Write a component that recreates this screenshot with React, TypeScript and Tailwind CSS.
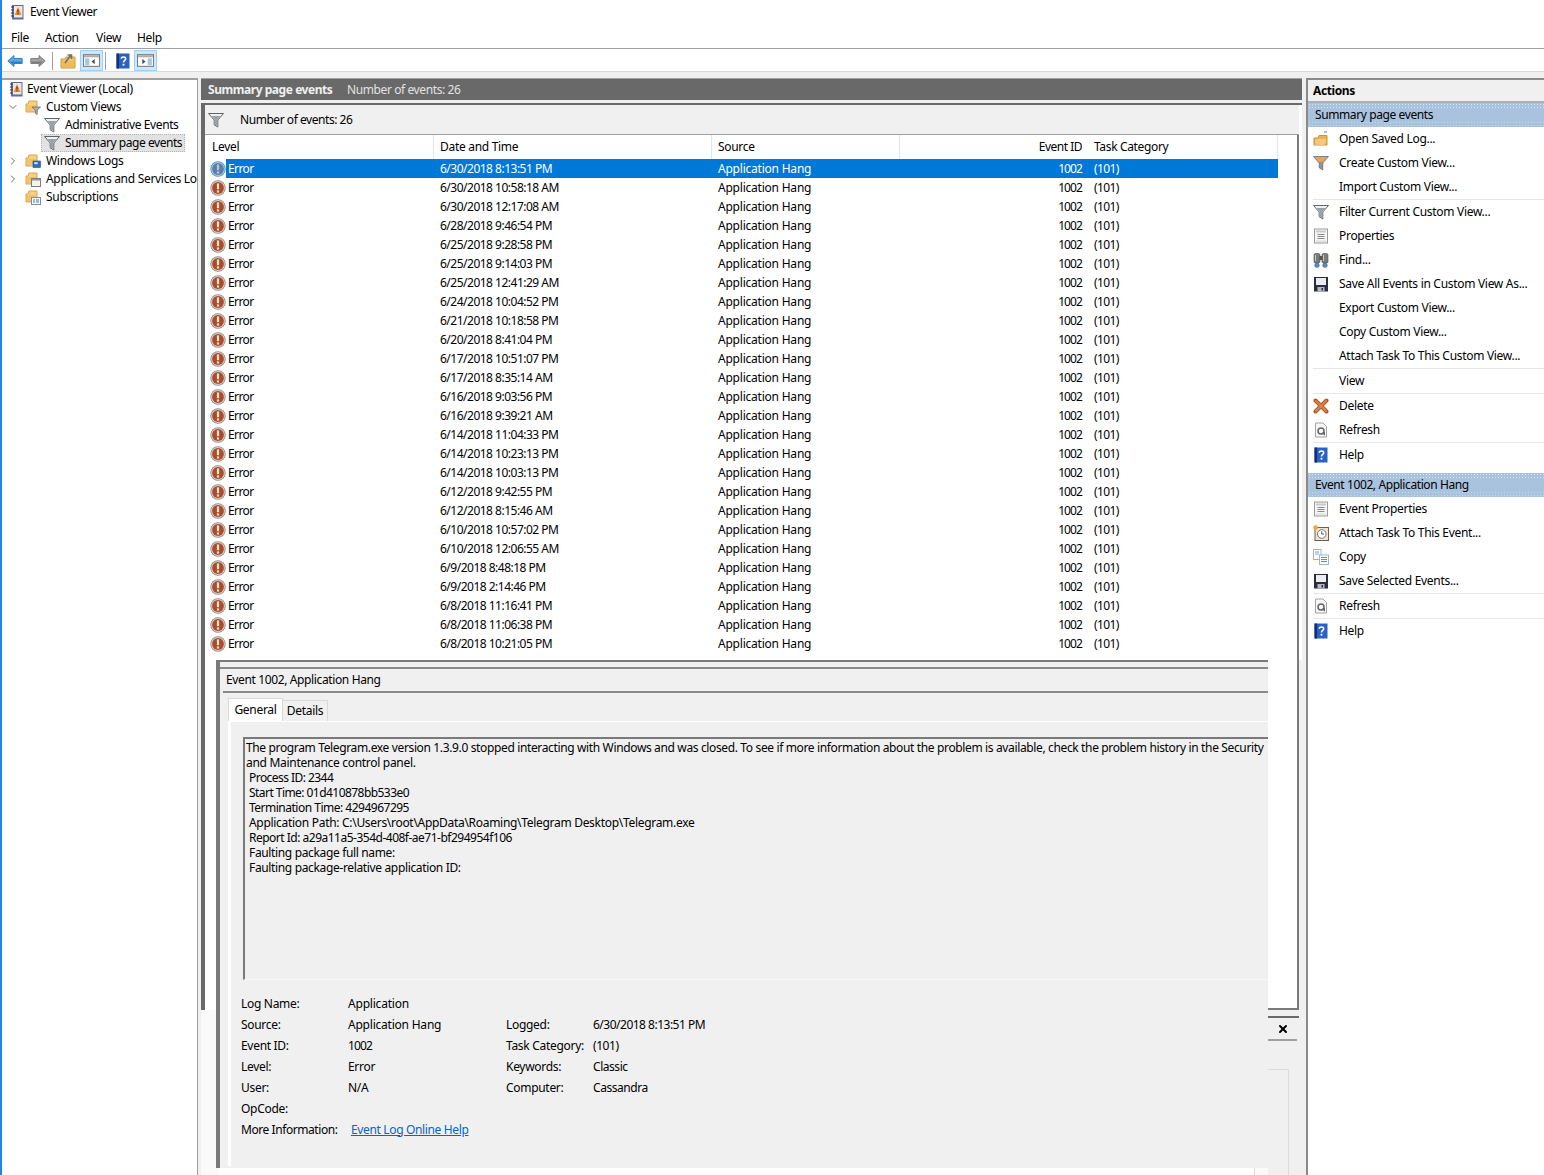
import type { ReactNode } from "react";
import { ChevronDown, ChevronRight, X } from "lucide-react";

const EVENTS = [
  "6/30/2018 8:13:51 PM",
  "6/30/2018 10:58:18 AM",
  "6/30/2018 12:17:08 AM",
  "6/28/2018 9:46:54 PM",
  "6/25/2018 9:28:58 PM",
  "6/25/2018 9:14:03 PM",
  "6/25/2018 12:41:29 AM",
  "6/24/2018 10:04:52 PM",
  "6/21/2018 10:18:58 PM",
  "6/20/2018 8:41:04 PM",
  "6/17/2018 10:51:07 PM",
  "6/17/2018 8:35:14 AM",
  "6/16/2018 9:03:56 PM",
  "6/16/2018 9:39:21 AM",
  "6/14/2018 11:04:33 PM",
  "6/14/2018 10:23:13 PM",
  "6/14/2018 10:03:13 PM",
  "6/12/2018 9:42:55 PM",
  "6/12/2018 8:15:46 AM",
  "6/10/2018 10:57:02 PM",
  "6/10/2018 12:06:55 AM",
  "6/9/2018 8:48:18 PM",
  "6/9/2018 2:14:46 PM",
  "6/8/2018 11:16:41 PM",
  "6/8/2018 11:06:38 PM",
  "6/8/2018 10:21:05 PM",
];

type IconName =
  | "app" | "back" | "forward" | "folderUp" | "pane" | "help" | "paneRight" | "folderFilter" | "folderLogs"
  | "folderApps" | "folderSubs" | "filter" | "filterOrange" | "openLog" | "props" | "find" | "save" | "del"
  | "refresh" | "task" | "copy" | "error" | "errorSel";

function Icon({ name, size = 16 }: { name: IconName; size?: number }) {
  const folder = (
    <>
      <path d="M1 5 H3 L4 2 H12 V13 H1 Z" fill="#f6cf82" stroke="#d8a54a" />
      <path d="M2 7 H11 M2 9 H9 M2 11 H8" stroke="#eeb55a" />
    </>
  );
  const body: Record<IconName, ReactNode> = {
    app: (
      <>
        <rect x="3" y="1" width="11.5" height="14.5" fill="#5a6aa0" />
        <rect x="5" y="2" width="8.5" height="11.5" fill="#f0e8d8" />
        <path d="M9 3 L12.6 11 H5.6 Z" fill="#e58f3a" />
        <rect x="8.4" y="5.5" width="1.2" height="3" fill="#7a2c12" />
        <rect x="8.4" y="9.2" width="1.2" height="1.2" fill="#7a2c12" />
        <path d="M2 3 H4.5 M2 6 H4.5 M2 9 H4.5 M2 12 H4.5" stroke="#30304a" />
      </>
    ),
    back: (
      <>
        <path d="M0.8 8 L7 2.5 V5.5 H15.2 V10.5 H7 V13.5 Z" fill="#5aa9ea" stroke="#1c6cb8" strokeWidth="0.8" />
        <path d="M3 8.4 H14.5 V10 H6.5 V12 Z" fill="#2b7cc9" />
      </>
    ),
    forward: (
      <>
        <path d="M15.2 8 L9 2.5 V5.5 H0.8 V10.5 H9 V13.5 Z" fill="#a3a3a3" stroke="#6a6a6a" strokeWidth="0.8" />
        <path d="M13 8.4 H1.5 V10 H9.5 V12 Z" fill="#7d7d7d" />
      </>
    ),
    folderUp: (
      <>
        <path d="M1 6 H5 L6 4 H15 V15 H1 Z" fill="#f3c469" stroke="#d09a3c" />
        <path d="M2 9 H14 M2 11 H14 M2 13 H14" stroke="#eab04f" />
        <path d="M5 10 L10.5 2.5 M7.5 2 H11.5 V6" stroke="#6f6f6f" strokeWidth="1.6" fill="none" />
      </>
    ),
    pane: (
      <>
        <rect x="0.5" y="2.5" width="15" height="11" fill="#fff" stroke="#7c7c7c" />
        <rect x="1" y="3" width="14" height="2" fill="#a8aeb5" />
        <rect x="2" y="6" width="4" height="6.5" fill="#a7c6e2" />
        <path d="M11 6.5 V11.5 L8 9 Z" fill="#4a4a4a" />
      </>
    ),
    paneRight: (
      <>
        <rect x="0.5" y="2.5" width="15" height="11" fill="#fff" stroke="#7c7c7c" />
        <rect x="1" y="3" width="14" height="2" fill="#a8aeb5" />
        <rect x="10" y="6" width="4" height="6.5" fill="#a7c6e2" />
        <path d="M5 6.5 V11.5 L8 9 Z" fill="#4a4a4a" />
      </>
    ),
    help: (
      <>
        <rect x="1.5" y="0.5" width="13" height="15" fill="#2a62c4" />
        <rect x="1.5" y="0.5" width="2.5" height="15" fill="#14306f" />
        <path d="M6.3 5.7 C6.3 3.4 10.7 3.4 10.7 5.7 C10.7 7.4 8.5 7.4 8.5 9.4" stroke="#fff" strokeWidth="1.5" fill="none" />
        <rect x="7.6" y="10.8" width="1.8" height="1.8" fill="#fff" />
      </>
    ),
    folderFilter: (
      <>
        {folder}
        <path d="M7 8 H15.5 L12.2 11.2 V15.5 L10.3 14.3 V11.2 Z" fill="#aab0b6" stroke="#5d6368" strokeWidth="0.7" />
      </>
    ),
    folderLogs: (
      <>
        {folder}
        <rect x="8" y="8" width="7.5" height="6.5" fill="#2c6fbe" stroke="#1e4f8c" strokeWidth="0.6" />
        <rect x="9.2" y="9.2" width="3.5" height="2" fill="#cfe2f5" />
      </>
    ),
    folderApps: (
      <>
        {folder}
        <rect x="6.5" y="7.5" width="9" height="8" fill="#f4f4f4" stroke="#7d7d7d" />
        <rect x="7" y="8" width="8" height="1.6" fill="#9a9a9a" />
      </>
    ),
    folderSubs: (
      <>
        {folder}
        <rect x="6.5" y="8.5" width="9" height="7" fill="#fbfbfb" stroke="#8a8a8a" />
        <path d="M8 11 H10 M11 11 H14 M8 13 H10 M11 13 H14" stroke="#3778c2" />
      </>
    ),
    filter: (
      <>
        <path d="M0.5 1.5 H15.5 L9.8 8 V15 L6.2 12.8 V8 Z" fill="#eef1f3" stroke="#5e6468" />
        <path d="M3.5 4 H12.5 L9.4 7.6 V14 L6.6 12.4 V7.6 Z" fill="#9aa2a8" />
      </>
    ),
    filterOrange: (
      <>
        <path d="M0.5 1.5 H15.5 L9.8 8 V15 L6.2 12.8 V8 Z" fill="#8f979d" stroke="#5e6468" strokeWidth="0.7" />
        <path d="M1.5 2 H14.5 L10 7 H6 Z" fill="#eea547" />
      </>
    ),
    openLog: (
      <>
        <path d="M1 7 H5 L6 4.5 H14 V14 H1 Z" fill="#eeb151" stroke="#cf9336" />
        <path d="M2.5 9 H13 M2.5 11 H13 M2.5 13 H12" stroke="#f9dfae" />
        <path d="M11 1 H14" stroke="#777" />
      </>
    ),
    props: (
      <>
        <rect x="1.5" y="1" width="13" height="14" fill="#f6f6f6" stroke="#9a9a9a" />
        <rect x="3" y="2.5" width="10" height="2" fill="#c9c9c9" />
        <path d="M4.5 6.5 H11.5 M4.5 8.5 H11.5 M4.5 10.5 H11.5" stroke="#8a8a8a" />
        <rect x="3" y="12.5" width="10" height="1.2" fill="#dcdcdc" />
      </>
    ),
    find: (
      <>
        <rect x="1" y="1.5" width="6" height="9.5" rx="1.5" fill="#7b7b7b" stroke="#4a4a4a" strokeWidth="0.6" />
        <rect x="9" y="1.5" width="6" height="9.5" rx="1.5" fill="#7b7b7b" stroke="#4a4a4a" strokeWidth="0.6" />
        <rect x="6.5" y="4" width="3" height="4" fill="#555" />
        <path d="M2.5 3 V9 M10.5 3 V9" stroke="#c8c8c8" />
        <circle cx="4" cy="13.3" r="2.2" fill="#4b92d8" stroke="#444" strokeWidth="0.5" />
        <circle cx="12" cy="13.3" r="2.2" fill="#4b92d8" stroke="#444" strokeWidth="0.5" />
      </>
    ),
    save: (
      <>
        <rect x="1" y="1" width="14" height="14.5" fill="#2c2c4a" />
        <rect x="3" y="2" width="10" height="7" fill="#ededed" />
        <rect x="4.5" y="11" width="7" height="4.5" fill="#b9b9b9" />
        <rect x="8.5" y="12" width="1.5" height="2.5" fill="#2c2c4a" />
      </>
    ),
    del: (
      <>
        <path d="M2.5 2.5 L13.5 13.5 M13.5 2.5 L2.5 13.5" stroke="#a9582b" strokeWidth="4" strokeLinecap="round" />
        <path d="M3 3 L13 13 M13 3 L3 13" stroke="#dd8249" strokeWidth="2" strokeLinecap="round" />
      </>
    ),
    refresh: (
      <>
        <path d="M2.5 1 H10 L13.5 4.5 V15 H2.5 Z" fill="#f7f7f7" stroke="#a3a3a3" />
        <circle cx="8" cy="9" r="3" stroke="#666" strokeWidth="1.5" fill="none" />
        <path d="M8.5 11 L12 13.8 L12 10 Z" fill="#666" />
      </>
    ),
    task: (
      <>
        <rect x="2" y="2.5" width="13.5" height="13" fill="#ece4d6" stroke="#6f5d4e" />
        <circle cx="8.7" cy="9" r="4.3" fill="#fff" stroke="#777" />
        <path d="M8.7 6.3 V9 H11" stroke="#555" fill="none" />
        <circle cx="2.6" cy="2.6" r="2.4" fill="#f3a43a" />
      </>
    ),
    copy: (
      <>
        <rect x="0.5" y="0.5" width="7.5" height="10" fill="#fff" stroke="#b0b0b0" />
        <path d="M2 3 H6 M2 5 H6" stroke="#6fa5dc" />
        <rect x="6.5" y="6" width="9" height="9.5" fill="#fff" stroke="#b0b0b0" />
        <path d="M8 8.5 H14 M8 10.5 H14 M8 12.5 H14" stroke="#4d8fd3" />
      </>
    ),
    error: (
      <>
        <circle cx="8" cy="8" r="7.7" fill="#8f8a87" />
        <circle cx="8" cy="8" r="6.9" fill="#d6cdc7" />
        <circle cx="8" cy="8" r="5.9" fill="#ad4b2b" />
        <rect x="6.9" y="3.4" width="2.2" height="5.8" fill="#f6e4d6" />
        <rect x="6.9" y="10.4" width="2.2" height="2.2" fill="#f6e4d6" />
      </>
    ),
    errorSel: (
      <>
        <circle cx="8" cy="8" r="7.7" fill="#4c8fd2" />
        <circle cx="8" cy="8" r="6.9" fill="#a9c8e8" />
        <circle cx="8" cy="8" r="5.9" fill="#5d7fa6" />
        <rect x="6.9" y="3.4" width="2.2" height="5.8" fill="#b6c3d2" />
        <rect x="6.9" y="10.4" width="2.2" height="2.2" fill="#b6c3d2" />
      </>
    ),
  };
  return (
    <svg width={size} height={size} viewBox="0 0 16 16" className="shrink-0 block">
      {body[name]}
    </svg>
  );
}

function ToolButton({ name }: { name: IconName }) {
  return (
    <div className="w-[23px] h-[21px] shrink-0 flex items-center justify-center bg-[#cce8ff] border border-[#99d1ff]">
      <Icon name={name} size={17} />
    </div>
  );
}

function TreeRow({ indent, chevron, icon, label, selected }: { indent: number; chevron?: "open" | "closed"; icon: IconName; label: string; selected?: boolean }) {
  const gap = indent === 6 ? "gap-[3px]" : "gap-[5px]";
  return (
    <div className="h-[18px] flex items-center whitespace-nowrap" style={{ paddingLeft: indent }}>
      {chevron !== undefined && (
        <span className="w-[17px] shrink-0 -ml-[21px] mr-[4px] flex justify-center text-[#6d6d6d]">
          {chevron === "open" ? <ChevronDown size={12} strokeWidth={2} /> : <ChevronRight size={12} strokeWidth={2} />}
        </span>
      )}
      {selected ? (
        <div className={`h-[18px] flex items-center ${gap} bg-[#e2e2e2] border border-dotted border-[#b5b5b5] -ml-[3px] pl-[2px] pr-[2px] tracking-[-0.45px]`}>
          <Icon name={icon} />
          <span>{label}</span>
        </div>
      ) : (
        <div className={`flex items-center ${gap}`}>
          <Icon name={icon} />
          <span className={indent === 42 ? "tracking-[-0.4px]" : undefined}>{label}</span>
        </div>
      )}
    </div>
  );
}

function ActionRow({ icon, label, sep }: { icon?: IconName; label: string; sep?: boolean }) {
  return (
    <div className={sep ? "h-[25px] flex items-center ml-[5px] border-b border-[#e6e6e6]" : "h-[24px] flex items-center ml-[5px]"}>
      <span className="w-[26px] flex justify-start">{icon && <Icon name={icon} />}</span>
      <span className="whitespace-nowrap">{label}</span>
    </div>
  );
}

function ActionBand({ label }: { label: string }) {
  return (
    <div className="relative h-[24px] flex items-center pl-[7px] bg-[#a9c2de] overflow-hidden">
      <div className="absolute inset-x-0 top-0 h-[5px] bg-[radial-gradient(#d8e6f3_0.7px,transparent_0.8px)] bg-[length:3px_3px]" />
      <div className="absolute inset-x-0 bottom-0 h-[6px] bg-[radial-gradient(#c5d8eb_0.7px,transparent_0.8px)] bg-[length:3px_3px]" />
      <span className="relative tracking-[-0.4px]">{label}</span>
    </div>
  );
}

function DetailRow({ label, value, track }: { label: string; value: string; track?: string }) {
  return (
    <div className="flex h-[21px] items-center">
      <span className="w-[107px]">{label}</span>
      <span className={track}>{value}</span>
    </div>
  );
}

export default function App() {
  return (
    <div className="w-[1544px] h-[1175px] overflow-hidden flex flex-col bg-white text-[12px] text-black font-['Noto_Sans','Open_Sans',sans-serif] tracking-[-0.3px] border-l-2 border-[#1e88e5]">
      {/* title bar */}
      <div className="h-[24px] flex items-center pl-[7px] gap-[5px]">
        <Icon name="app" />
        <span className="tracking-[-0.45px]">Event Viewer</span>
      </div>
      <div className="h-[25px] flex items-center pl-[9px] pt-[3px] border-b border-[#a0a0a0]">
        <span className="w-[34px]">File</span>
        <span className="w-[51px]">Action</span>
        <span className="w-[41px]">View</span>
        <span>Help</span>
      </div>
      {/* toolbar */}
      <div className="h-[23px] flex items-center pl-[1px] pt-[1px] border-b border-[#d9d9d9]">
        <div className="w-[23px] shrink-0 flex justify-center"><Icon name="back" /></div>
        <div className="w-[23px] shrink-0 flex justify-center"><Icon name="forward" /></div>
        <div className="w-[1px] h-[18px] bg-[#a0a0a0] ml-[3px]" />
        <div className="w-[23px] shrink-0 ml-[3px] flex justify-center"><Icon name="folderUp" /></div>
        <div className="ml-[1px]"><ToolButton name="pane" /></div>
        <div className="w-[1px] h-[18px] bg-[#a0a0a0] ml-[2px]" />
        <div className="w-[23px] shrink-0 ml-[5px] flex justify-center"><Icon name="help" /></div>
        <ToolButton name="paneRight" />
      </div>

      <div className="flex-1 min-h-0 flex bg-[#f0f0f0] pt-[6px]">
        {/* tree */}
        <div className="w-[196px] shrink-0 overflow-hidden bg-white border-t-2 border-r border-t-[#a0a0a0] border-r-[#a0a0a0]">
          <TreeRow indent={6} icon="app" label="Event Viewer (Local)" />
          <TreeRow indent={23} chevron="open" icon="folderFilter" label="Custom Views" />
          <TreeRow indent={42} icon="filter" label="Administrative Events" />
          <TreeRow indent={42} icon="filter" label="Summary page events" selected />
          <TreeRow indent={23} chevron="closed" icon="folderLogs" label="Windows Logs" />
          <TreeRow indent={23} chevron="closed" icon="folderApps" label="Applications and Services Logs" />
          <TreeRow indent={23} icon="folderSubs" label="Subscriptions" />
        </div>

        {/* centre */}
        <div className="w-[1101px] ml-[3px] shrink-0 flex flex-col bg-[#fafafa]">
          <div className="h-[22px] shrink-0 bg-[#696969] text-[#f0f0f0] flex items-center pl-[7px] border-t border-[#a0a0a0]">
            <span className="font-bold w-[139px] tracking-[-0.45px]">Summary page events</span>
            <span className="text-[#e2e2e2] tracking-[-0.4px]">Number of events: 26</span>
          </div>
          <div className="h-[3px] shrink-0 bg-[#f0f0f0]" />
          <div className="h-[907px] shrink-0 flex flex-col border-l-4 border-t-2 border-[#696969] bg-white">
            <div className="h-[30px] shrink-0 flex items-center bg-[#f0f0f0] border-b border-[#a0a0a0] pl-[3px] mr-[3px]">
              <Icon name="filter" />
              <span className="ml-[16px] tracking-[-0.45px]">Number of events: 26</span>
            </div>
            {/* table */}
            <div className="h-[525px] shrink-0 mr-[3px] border-r-2 border-[#7a7a7a]">
              <div className="w-[1073px]">
                <div className="h-[24px] flex items-center">
                  <span className="w-[229px] pl-[7px] h-full leading-[23px] border-r border-[#e5e5e5]">Level</span>
                  <span className="w-[278px] pl-[6px] h-full leading-[23px] border-r border-[#e5e5e5]">Date and Time</span>
                  <span className="w-[188px] pl-[6px] h-full leading-[23px] border-r border-[#e5e5e5]">Source</span>
                  <span className="w-[188px] pr-[6px] text-right h-full leading-[23px] tracking-[-0.5px]">Event ID</span>
                  <span className="w-[190px] pl-[6px] h-full leading-[23px] border-r border-[#e5e5e5] tracking-[-0.35px]">Task Category</span>
                </div>
                {EVENTS.map((date, i) => (
                  <div key={date} className="h-[19px] flex items-center">
                    <div className="w-[21px] pl-[5px] shrink-0"><Icon name={i === 0 ? "errorSel" : "error"} /></div>
                    <div className={i === 0 ? "flex flex-1 h-full items-center bg-[#0078d7] text-white" : "flex flex-1 h-full items-center"}>
                      <span className="w-[208px] pl-[2px] tracking-[-0.6px]">Error</span>
                      <span className="w-[278px] pl-[6px] tracking-[-0.5px]">{date}</span>
                      <span className="w-[188px] pl-[6px] tracking-[-0.22px]">Application Hang</span>
                      <span className="w-[188px] pr-[6px] text-right tracking-[-0.9px]">1002</span>
                      <span className="pl-[6px] tracking-[-0.6px]">(101)</span>
                    </div>
                  </div>
                ))}
              </div>
            </div>

            {/* lower area: preview pane, then the strip beside its clipped edge */}
            <div className="h-[515px] shrink-0 flex">
              <div className="w-[11px] shrink-0" />
              <div className="w-[1052px] shrink-0 flex flex-col">
                <div className="h-[508px] shrink-0 overflow-hidden border-t-2 border-l-4 border-[#7a7a7a] bg-[#f0f0f0]">
                  <div className="mt-[5px] h-[2px] bg-[#8a8a8a]" />
                  <div className="ml-[3px] pl-[3px] h-[24px] flex items-center border-b-2 border-[#8a8a8a] tracking-[-0.37px]">Event 1002, Application Hang</div>
                  <div className="pl-[8px] h-[28px] flex items-end">
                    <div className="h-[23px] w-[55px] bg-white border-x border-t border-[#d9d9d9] flex items-center justify-center">General</div>
                    <div className="h-[21px] w-[45px] border-r border-t border-[#d9d9d9] flex items-center justify-center">Details</div>
                  </div>
                  <div className="ml-[8px] border-l-[3px] border-l-white border-t border-t-white h-[445px] pl-[12px] pt-[15px]">
                    <div className="h-[243px] border-l-2 border-t-2 border-[#7a7a7a] border-b border-b-[#f9f9f9] pl-[1px] pt-[1px] leading-[15px] whitespace-nowrap">
                      <div className="tracking-[-0.36px]">The program Telegram.exe version 1.3.9.0 stopped interacting with Windows and was closed. To see if more information about the problem is available, check the problem history in the Security</div>
                      <div>and Maintenance control panel.</div>
                      <div className="pl-[3px]">
                        <div className="tracking-[-0.55px]">Process ID: 2344</div>
                        <div className="tracking-[-0.55px]">Start Time: 01d410878bb533e0</div>
                        <div className="tracking-[-0.5px]">Termination Time: 4294967295</div>
                        <div>Application Path: C:\Users\root\AppData\Roaming\Telegram Desktop\Telegram.exe</div>
                        <div className="tracking-[-0.5px]">Report Id: a29a11a5-354d-408f-ae71-bf294954f106</div>
                        <div className="tracking-[-0.35px]">Faulting package full name:</div>
                        <div className="tracking-[-0.35px]">Faulting package-relative application ID:</div>
                      </div>
                    </div>
                    <div className="mt-[13px] ml-[-2px] flex">
                      <div className="w-[265px]">
                        <DetailRow label="Log Name:" value="Application" track="tracking-[-0.2px]" />
                        <DetailRow label="Source:" value="Application Hang" track="tracking-[-0.22px]" />
                        <DetailRow label="Event ID:" value="1002" track="tracking-[-0.9px]" />
                        <DetailRow label="Level:" value="Error" />
                        <DetailRow label="User:" value="N/A" />
                        <DetailRow label="OpCode:" value="" />
                        <div className="flex h-[21px] items-center">
                          <span className="w-[110px] tracking-[-0.43px]">More Information:</span>
                          <span className="text-[#0066cc] underline tracking-[-0.35px]">Event Log Online Help</span>
                        </div>
                      </div>
                      <div className="pt-[21px]">
                        {[["Logged:", "6/30/2018 8:13:51 PM"], ["Task Category:", "(101)"], ["Keywords:", "Classic"], ["Computer:", "Cassandra"]].map(([k, v]) => (
                          <div key={k} className="flex h-[21px] items-center">
                            <span className="w-[87px]">{k}</span>
                            <span className={k === "Logged:" ? "tracking-[-0.5px]" : "tracking-[-0.45px]"}>{v}</span>
                          </div>
                        ))}
                      </div>
                    </div>
                  </div>
                </div>
                <div className="h-[7px] shrink-0 bg-white ml-[3px] mr-[13px] border-r border-[#dcdcdc]" />
              </div>
              {/* strip right of the clipped preview pane */}
              <div className="flex-1 flex flex-col bg-[#f0f0f0] min-w-0">
                <div className="h-[350px] shrink-0 bg-white border-r-2 border-b-2 border-[#7a7a7a] mr-[3px]" />
                <div className="h-[6px] shrink-0" />
                <div className="h-[2px] shrink-0 bg-[#696969] mr-[3px]" />
                <div className="h-[21px] shrink-0 flex items-center justify-end pr-[13px]">
                  <X size={12} strokeWidth={4} className="text-black" />
                </div>
                <div className="h-[2px] shrink-0 bg-[#a0a0a0] mr-[5px]" />
                <div className="h-[28px] shrink-0" />
                <div className="h-[106px] shrink-0 border-r border-t border-[#dcdcdc] mr-[13px]" />
              </div>
            </div>
          </div>
        </div>

        {/* actions */}
        <div className="flex-1 min-w-0 ml-[4px] bg-white border-l-2 border-t-2 border-[#8a8a8a]">
          <div className="h-[23px] flex items-center pl-[5px] font-bold bg-[#f0f0f0] border-b-2 border-[#b0b0b0] tracking-[-0.4px]">Actions</div>
          <ActionBand label="Summary page events" />
          <ActionRow icon="openLog" label="Open Saved Log..." />
          <ActionRow icon="filterOrange" label="Create Custom View..." />
          <ActionRow label="Import Custom View..." sep />
          <ActionRow icon="filter" label="Filter Current Custom View..." />
          <ActionRow icon="props" label="Properties" />
          <ActionRow icon="find" label="Find..." />
          <ActionRow icon="save" label="Save All Events in Custom View As..." />
          <ActionRow label="Export Custom View..." />
          <ActionRow label="Copy Custom View..." />
          <ActionRow label="Attach Task To This Custom View..." sep />
          <ActionRow label="View" sep />
          <ActionRow icon="del" label="Delete" />
          <ActionRow icon="refresh" label="Refresh" sep />
          <ActionRow icon="help" label="Help" />
          <div className="h-[6px]" />
          <ActionBand label="Event 1002, Application Hang" />
          <ActionRow icon="props" label="Event Properties" />
          <ActionRow icon="task" label="Attach Task To This Event..." />
          <ActionRow icon="copy" label="Copy" />
          <ActionRow icon="save" label="Save Selected Events..." sep />
          <ActionRow icon="refresh" label="Refresh" sep />
          <ActionRow icon="help" label="Help" />
        </div>
      </div>
    </div>
  );
}
